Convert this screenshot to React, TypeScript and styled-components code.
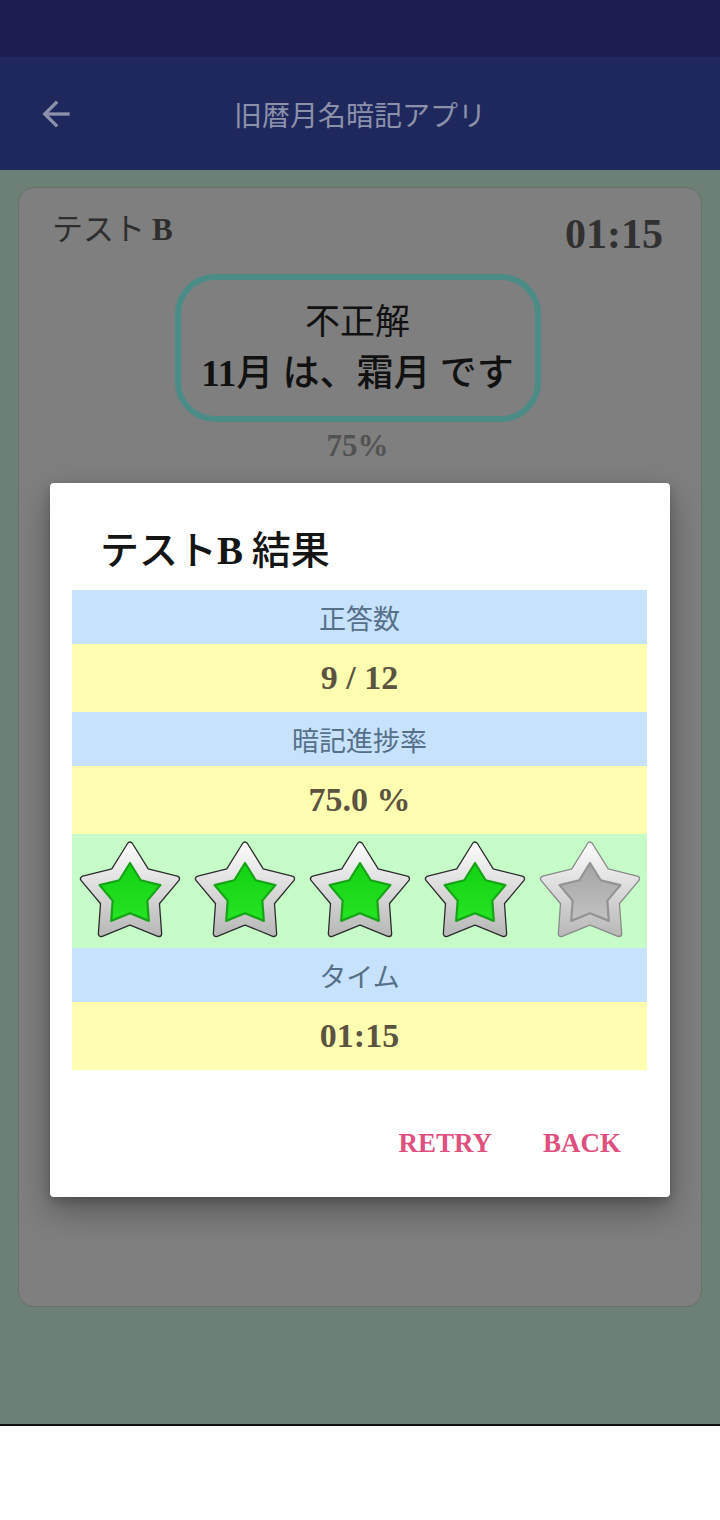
import React from "react";
import styled, { createGlobalStyle } from "styled-components";

const Global = createGlobalStyle`
  html, body { margin: 0; padding: 0; background: #ffffff; }
  * { box-sizing: border-box; }
`;

const SERIF = `"Liberation Serif", "Noto Sans CJK JP", serif`;
const SANS = `"Noto Sans CJK JP", "Noto Sans", sans-serif`;

const Screen = styled.div`
  position: relative;
  width: 720px;
  height: 1520px;
  display: flex;
  flex-direction: column;
  overflow: hidden;
  font-family: ${SERIF};
`;

const StatusBar = styled.div`
  height: 57px;
  background: #1a1e50;
  flex: none;
`;

const AppBar = styled.header`
  height: 113px;
  flex: none;
  background: #1f285d;
  display: flex;
  align-items: center;
  position: relative;
  padding-left: 36px;
`;

const BackBtn = styled.div`
  width: 40px;
  height: 40px;
  display: flex;
  align-items: center;
  justify-content: center;
`;

const AppTitle = styled.h1`
  margin: 0;
  flex: 1;
  text-align: center;
  padding-right: 76px;
  font-family: ${SANS};
  font-weight: 400;
  font-size: 28px;
  color: #8c91a9;
`;

const Content = styled.main`
  flex: none;
  height: 1254px;
  background: #6d8076;
  padding: 17px 18px 0 18px;
`;

const Card = styled.section`
  height: 1120px;
  background: #7f7f7f;
  border: 1px solid #6b706c;
  border-radius: 16px;
  padding: 18px 38px 0 33px;
  display: flex;
  flex-direction: column;
  align-items: center;
`;

const CardHeader = styled.div`
  width: 100%;
  display: flex;
  justify-content: space-between;
  align-items: flex-start;
`;

const TestName = styled.div`
  font-family: ${SANS};
  font-size: 31px;
  color: #2e2e2e;
  line-height: 42px;
`;

const Latin = styled.span`
  font-family: ${SERIF};
  font-weight: 700;
`;

const Timer = styled.div`
  font-family: ${SERIF};
  font-weight: 700;
  font-size: 42px;
  color: #313131;
  line-height: 48px;
  margin-top: 4px;
`;

const Bubble = styled.div`
  margin-top: 16px;
  width: 366px;
  height: 148px;
  border: 6px solid #4b8c87;
  border-radius: 40px;
  display: flex;
  flex-direction: column;
  align-items: center;
  justify-content: center;
`;

const BubbleLine = styled.div<{ $strong?: boolean }>`
  font-family: ${SERIF};
  font-size: ${(p) => (p.$strong ? 37 : 35)}px;
  line-height: 51px;
  color: #111111;
  font-weight: ${(p) => (p.$strong ? 500 : 400)};
`;

const Percent = styled.div`
  margin-top: 6px;
  font-family: ${SERIF};
  font-weight: 700;
  font-size: 31px;
  color: #525252;
`;

const NavArea = styled.div`
  flex: 1;
  background: #ffffff;
  border-top: 2px solid #111111;
`;

const Dialog = styled.div`
  position: absolute;
  left: 50px;
  top: 483px;
  width: 620px;
  height: 714px;
  background: #ffffff;
  border-radius: 4px;
  box-shadow: 0 14px 34px rgba(0, 0, 0, 0.32), 0 4px 10px rgba(0, 0, 0, 0.18);
  display: flex;
  flex-direction: column;
  padding: 40px 23px 0 22px;
`;

const DialogTitle = styled.h2`
  margin: 0 0 15px 28px;
  font-family: ${SANS};
  font-weight: 500;
  font-size: 39px;
  line-height: 48px;
  color: #151515;
`;

const Table = styled.div`
  display: flex;
  flex-direction: column;
`;

const LabelRow = styled.div`
  height: 54px;
  background: #c7e2fd;
  display: flex;
  align-items: center;
  justify-content: center;
  font-family: ${SANS};
  font-size: 27px;
  color: #56708a;
`;

const ValueRow = styled.div`
  height: 68px;
  background: #fffdb0;
  display: flex;
  align-items: center;
  justify-content: center;
  font-family: ${SERIF};
  font-weight: 700;
  font-size: 34px;
  color: #5b5340;
`;

const StarRow = styled.div`
  height: 114px;
  background: #c6fcc8;
  display: grid;
  grid-template-columns: repeat(5, 1fr);
  align-items: center;
  justify-items: center;
`;

const Actions = styled.div`
  margin-top: 50px;
  display: flex;
  justify-content: flex-end;
  gap: 51px;
  padding-right: 26px;
`;

const ActionBtn = styled.button`
  border: none;
  background: transparent;
  padding: 0;
  font-family: ${SERIF};
  font-weight: 700;
  font-size: 27px;
  line-height: 46px;
  color: #e0507f;
  cursor: pointer;
`;

function starPoints(R: number, ratio: number): string {
  const pts: string[] = [];
  for (let i = 0; i < 10; i++) {
    const r = i % 2 === 0 ? R : R * ratio;
    const a = (-90 + i * 36) * (Math.PI / 180);
    pts.push(`${(r * Math.cos(a)).toFixed(2)},${(r * Math.sin(a)).toFixed(2)}`);
  }
  return pts.join(" ");
}

const Star: React.FC<{ on: boolean; id: string }> = ({ on, id }) => {
  const outer = starPoints(49, 0.57);
  const inner = starPoints(32, 0.57);
  return (
    <svg width="108" height="104" viewBox="-54 -55 108 104">
      <defs>
        <linearGradient id={`silver-${id}`} x1="0" y1="0" x2="0" y2="1">
          <stop offset="0" stopColor="#fbfbfb" />
          <stop offset="0.45" stopColor="#dedede" />
          <stop offset="1" stopColor="#b9b9b9" />
        </linearGradient>
        <linearGradient id={`inner-${id}`} x1="0" y1="0" x2="0" y2="1">
          {on ? (
            <>
              <stop offset="0" stopColor="#12d212" />
              <stop offset="1" stopColor="#24e424" />
            </>
          ) : (
            <>
              <stop offset="0" stopColor="#a4a4a4" />
              <stop offset="1" stopColor="#c2c2c2" />
            </>
          )}
        </linearGradient>
      </defs>
      <polygon
        points={outer}
        fill="#3a3a3a"
        stroke={on ? "#2c2c2c" : "#8a8a8a"}
        strokeWidth={7}
        strokeLinejoin="round"
      />
      <polygon
        points={outer}
        fill={`url(#silver-${id})`}
        stroke={`url(#silver-${id})`}
        strokeWidth={4.4}
        strokeLinejoin="round"
      />
      <polygon
        points={inner}
        fill={`url(#inner-${id})`}
        stroke={on ? "#17a317" : "#939393"}
        strokeWidth={2.2}
        strokeLinejoin="round"
        transform="translate(0 1)"
      />
    </svg>
  );
};

const rows = [
  { label: "正答数", value: "9 / 12" },
  { label: "暗記進捗率", value: "75.0 %" },
];

export default function App() {
  const stars = [true, true, true, true, false];
  return (
    <>
      <Global />
      <Screen>
        <StatusBar />
        <AppBar>
          <BackBtn>
            <svg width="36" height="36" viewBox="0 0 24 24" fill="none" stroke="#8c91a9" strokeWidth="2.2" strokeLinecap="square">
              <path d="M20 12H5.5" />
              <path d="M12 4.5L4.5 12L12 19.5" />
            </svg>
          </BackBtn>
          <AppTitle>旧暦月名暗記アプリ</AppTitle>
        </AppBar>
        <Content>
          <Card>
            <CardHeader>
              <TestName>
                テスト <Latin>B</Latin>
              </TestName>
              <Timer>01:15</Timer>
            </CardHeader>
            <Bubble>
              <BubbleLine>不正解</BubbleLine>
              <BubbleLine $strong>
                <Latin>11</Latin>月 は、霜月 です
              </BubbleLine>
            </Bubble>
            <Percent>75%</Percent>
          </Card>
        </Content>
        <NavArea />
        <Dialog role="dialog">
          <DialogTitle>
            テスト<Latin>B</Latin> 結果
          </DialogTitle>
          <Table>
            {rows.map((r) => (
              <React.Fragment key={r.label}>
                <LabelRow>{r.label}</LabelRow>
                <ValueRow>{r.value}</ValueRow>
              </React.Fragment>
            ))}
            <StarRow>
              {stars.map((on, i) => (
                <Star key={i} on={on} id={String(i)} />
              ))}
            </StarRow>
            <LabelRow>タイム</LabelRow>
            <ValueRow>01:15</ValueRow>
          </Table>
          <Actions>
            <ActionBtn>RETRY</ActionBtn>
            <ActionBtn>BACK</ActionBtn>
          </Actions>
        </Dialog>
      </Screen>
    </>
  );
}
